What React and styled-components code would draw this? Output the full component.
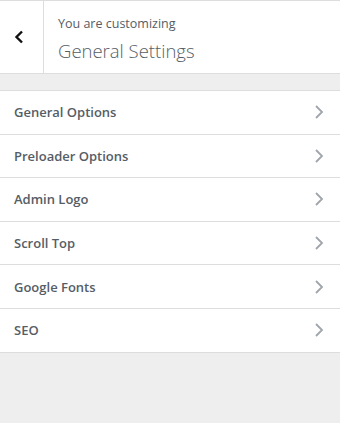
import React from 'react';
import styled, {createGlobalStyle} from "styled-components";

const GlobalStyle = createGlobalStyle`
  html, body {
    margin: 0;
    padding: 0;
    background: #eeeeee;
    font-family: "Open Sans", "Noto Sans", sans-serif;
  }
`

const Panel = styled.div`
  width: 340px;
  height: 423px;
  background-color: #eeeeee;
  border-top: 1px solid #dddddd;
  box-sizing: border-box;
`

const Header = styled.div`
  display: flex;
  height: 72px;
  background-color: #ffffff;
  border-bottom: 1px solid #dddddd;
`

const BackButton = styled.button`
  width: 44px;
  flex: none;
  border: none;
  border-right: 1px solid #dddddd;
  background: transparent;
  padding: 0 6px 0 0;
  display: flex;
  align-items: center;
  justify-content: center;
  cursor: pointer;
`

const Title = styled.div`
  padding: 14px 14px 0 14px;
  color: #555d66;
`

const Action = styled.span`
  display: block;
  font-size: 12.5px;
  line-height: 18px;
`

const PanelName = styled.h3`
  margin: 5px 0 0;
  font-size: 18.5px;
  font-weight: 300;
  line-height: 26px;
  color: #555d66;
`

const List = styled.ul`
  list-style: none;
  margin: 16px 0 0;
  padding: 0;
  border-top: 1px solid #dddddd;
`

const Item = styled.li`
  display: flex;
  align-items: center;
  justify-content: space-between;
  height: 43.6px;
  box-sizing: border-box;
  padding: 0 15px 0 14px;
  background-color: #ffffff;
  border-bottom: 1px solid #dddddd;
  color: #555d66;
  font-size: 13px;
  font-weight: 600;
`

const Chevron = ({color = '#a0a5aa', size = 12, width = 1.8}) => (
    <svg width={size} height={size + 4} viewBox="0 0 12 16">
        <path d="M3 2 L9 8 L3 14" fill="none" stroke={color} strokeWidth={width}/>
    </svg>
)

const items = ['General Options', 'Preloader Options', 'Admin Logo', 'Scroll Top', 'Google Fonts', 'SEO'];

const App = () => {
    return (
        <>
            <GlobalStyle/>
            <Panel>
                <Header>
                    <BackButton aria-label="Back">
                        <svg width="12" height="14" viewBox="0 0 12 14">
                            <path d="M9 1.5 L3.5 7 L9 12.5" fill="none" stroke="#111" strokeWidth="2.4"/>
                        </svg>
                    </BackButton>
                    <Title>
                        <Action>You are customizing</Action>
                        <PanelName>General Settings</PanelName>
                    </Title>
                </Header>
                <List>
                    {items.map(name => (
                        <Item key={name}>
                            {name}
                            <Chevron/>
                        </Item>
                    ))}
                </List>
            </Panel>
        </>
    );
}

export default App
